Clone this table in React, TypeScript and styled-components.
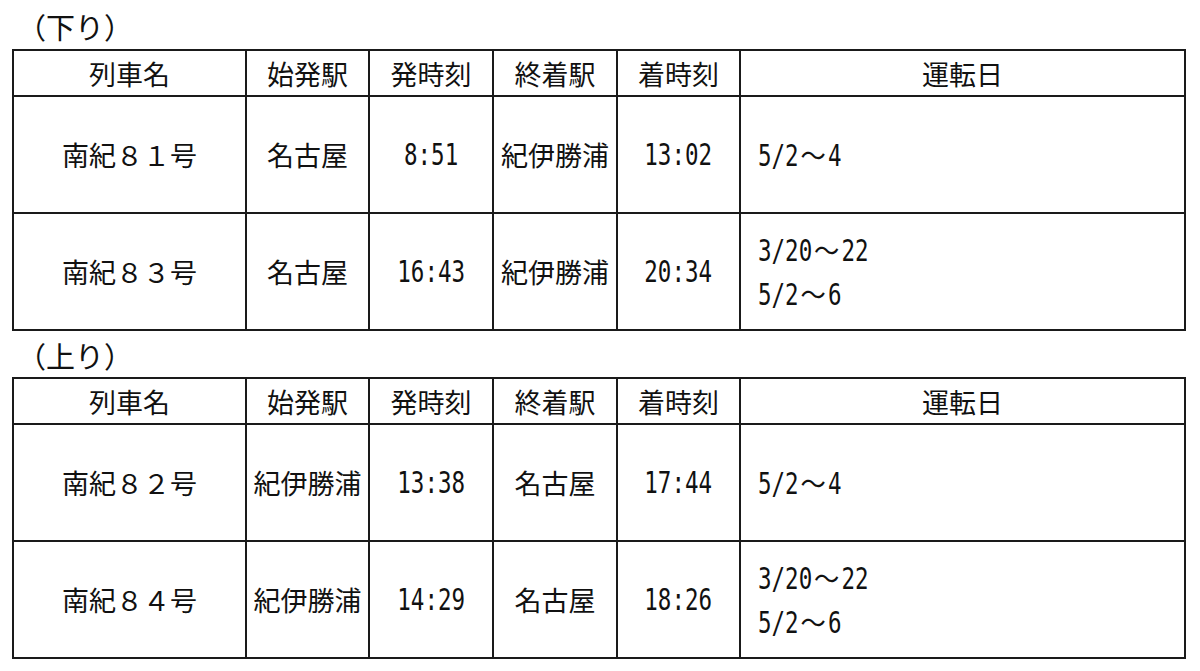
import React from "react";
import styled, { createGlobalStyle } from "styled-components";

const GlobalStyle = createGlobalStyle`
  html, body {
    margin: 0;
    padding: 0;
    background: #fff;
  }
  body {
    font-family: "Noto Sans CJK JP", sans-serif;
    color: #111;
  }
`;

const Page = styled.div`
  width: 1200px;
  padding: 0 0 0 12px;
  box-sizing: border-box;
`;

const Caption = styled.div<{ $h: number }>`
  height: ${(p) => p.$h}px;
  display: flex;
  align-items: center;
  padding: 2px 0 0 5px;
  box-sizing: border-box;
  font-size: 29px;
  font-family: "Noto Sans CJK JP", sans-serif;
`;

const Table = styled.table`
  width: 1174px;
  border-collapse: collapse;
  table-layout: fixed;
  font-size: 27px;
`;

const HeadCell = styled.th<{ $w?: number }>`
  width: ${(p) => (p.$w ? `${p.$w}px` : "auto")};
  height: 44px;
  padding: 0;
  border: 2px solid #1a1a1a;
  font-weight: 400;
  text-align: center;
  vertical-align: middle;
  font-family: "Noto Sans CJK JP", sans-serif;
  line-height: 1;
`;

const Cell = styled.td<{ $left?: boolean }>`
  height: 115px;
  padding: ${(p) => (p.$left ? "0 0 0 17px" : "0")};
  border: 2px solid #1a1a1a;
  text-align: ${(p) => (p.$left ? "left" : "center")};
  vertical-align: middle;
  line-height: 44px;
  white-space: nowrap;
`;

/* half-width digits in the source are monospaced, tall and narrow */
const Narrow = styled.span<{ $origin?: string }>`
  display: inline-block;
  font-family: "DejaVu Sans Mono", "Noto Sans CJK JP", monospace;
  font-size: 30px;
  transform: scaleX(0.75);
  transform-origin: ${(p) => p.$origin || "center"};
`;

const Wave = styled.span`
  font-family: "Noto Sans CJK JP", sans-serif;
  font-size: 27px;
  display: inline-block;
  transform: scaleX(1.25);
  margin: 0 6px;
`;

const DayLine = styled.div`
  height: 44px;
`;

type Row = {
  name: string;
  from: string;
  dep: string;
  to: string;
  arr: string;
  days: string[];
};

const down: Row[] = [
  { name: "南紀８１号", from: "名古屋", dep: "8:51", to: "紀伊勝浦", arr: "13:02", days: ["5/2～4"] },
  { name: "南紀８３号", from: "名古屋", dep: "16:43", to: "紀伊勝浦", arr: "20:34", days: ["3/20～22", "5/2～6"] },
];

const up: Row[] = [
  { name: "南紀８２号", from: "紀伊勝浦", dep: "13:38", to: "名古屋", arr: "17:44", days: ["5/2～4"] },
  { name: "南紀８４号", from: "紀伊勝浦", dep: "14:29", to: "名古屋", arr: "18:26", days: ["3/20～22", "5/2～6"] },
];

function Day({ text }: { text: string }) {
  const [a, b] = text.split("～");
  return (
    <DayLine>
      <Narrow $origin="left">
        {a}
        <Wave>～</Wave>
        {b}
      </Narrow>
    </DayLine>
  );
}

function Timetable({ rows }: { rows: Row[] }) {
  return (
    <Table>
      <thead>
        <tr>
          <HeadCell $w={231}>列車名</HeadCell>
          <HeadCell $w={121}>始発駅</HeadCell>
          <HeadCell $w={122}>発時刻</HeadCell>
          <HeadCell $w={122}>終着駅</HeadCell>
          <HeadCell $w={121}>着時刻</HeadCell>
          <HeadCell>運転日</HeadCell>
        </tr>
      </thead>
      <tbody>
        {rows.map((r) => (
          <tr key={r.name}>
            <Cell>{r.name}</Cell>
            <Cell>{r.from}</Cell>
            <Cell>
              <Narrow>{r.dep}</Narrow>
            </Cell>
            <Cell>{r.to}</Cell>
            <Cell>
              <Narrow>{r.arr}</Narrow>
            </Cell>
            <Cell $left>
              {r.days.map((d) => (
                <Day key={d} text={d} />
              ))}
            </Cell>
          </tr>
        ))}
      </tbody>
    </Table>
  );
}

export default function App() {
  return (
    <Page>
      <GlobalStyle />
      <Caption $h={49}>（下り）</Caption>
      <Timetable rows={down} />
      <Caption $h={46}>（上り）</Caption>
      <Timetable rows={up} />
    </Page>
  );
}
